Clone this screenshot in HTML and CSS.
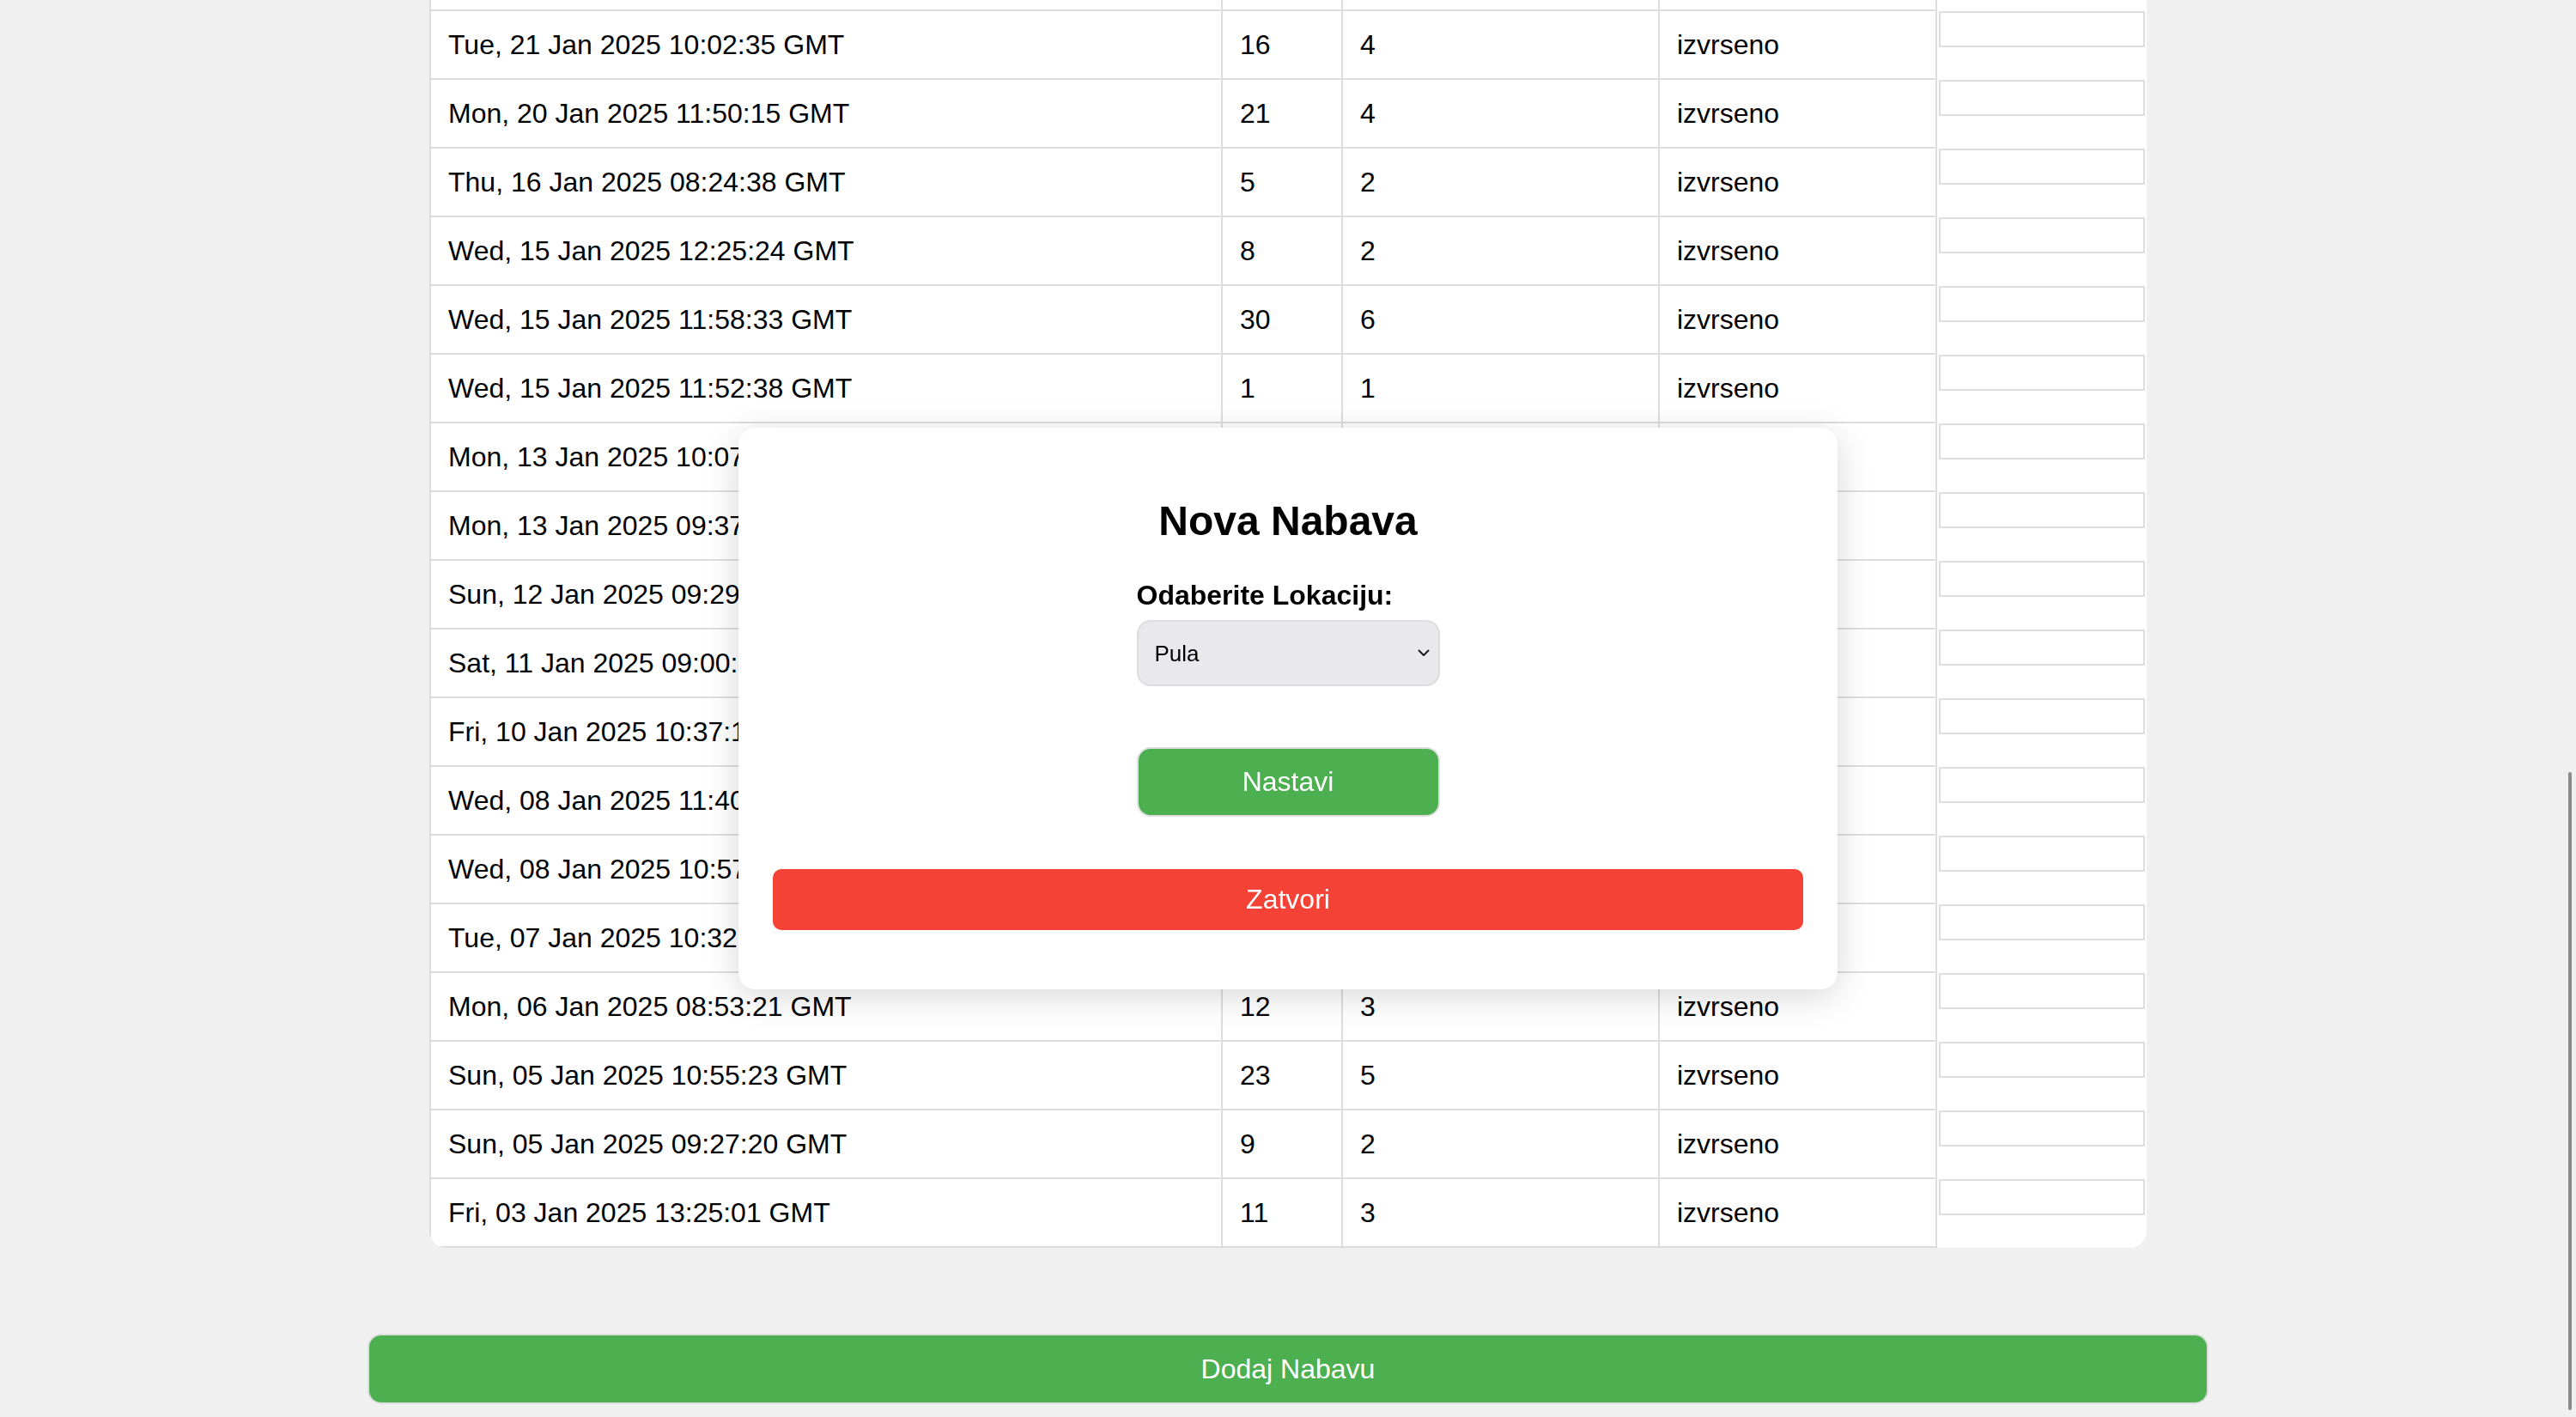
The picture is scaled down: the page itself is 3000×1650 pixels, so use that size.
FILE: index.html
```html
<!DOCTYPE html>
<html lang="hr">
<head>
<meta charset="utf-8">
<title>Nabava</title>
<link rel="stylesheet" href="styles.css">
</head>
<body>
<main class="page">
  <section class="table-card">
    <table class="orders">
      <colgroup>
        <col class="c-date">
        <col class="c-qty">
        <col class="c-items">
        <col class="c-status">
        <col class="c-action">
      </colgroup>
      <tbody>
        <tr class="row-partial"><td></td><td></td><td></td><td></td><td class="action"></td></tr>
        <tr><td>Tue, 21 Jan 2025 10:02:35 GMT</td><td>16</td><td>4</td><td>izvrseno</td><td class="action"><div class="slot"></div></td></tr>
        <tr><td>Mon, 20 Jan 2025 11:50:15 GMT</td><td>21</td><td>4</td><td>izvrseno</td><td class="action"><div class="slot"></div></td></tr>
        <tr><td>Thu, 16 Jan 2025 08:24:38 GMT</td><td>5</td><td>2</td><td>izvrseno</td><td class="action"><div class="slot"></div></td></tr>
        <tr><td>Wed, 15 Jan 2025 12:25:24 GMT</td><td>8</td><td>2</td><td>izvrseno</td><td class="action"><div class="slot"></div></td></tr>
        <tr><td>Wed, 15 Jan 2025 11:58:33 GMT</td><td>30</td><td>6</td><td>izvrseno</td><td class="action"><div class="slot"></div></td></tr>
        <tr><td>Wed, 15 Jan 2025 11:52:38 GMT</td><td>1</td><td>1</td><td>izvrseno</td><td class="action"><div class="slot"></div></td></tr>
        <tr><td>Mon, 13 Jan 2025 10:07:14 GMT</td><td></td><td></td><td></td><td class="action"><div class="slot"></div></td></tr>
        <tr><td>Mon, 13 Jan 2025 09:37:52 GMT</td><td></td><td></td><td></td><td class="action"><div class="slot"></div></td></tr>
        <tr><td>Sun, 12 Jan 2025 09:29:05 GMT</td><td></td><td></td><td></td><td class="action"><div class="slot"></div></td></tr>
        <tr><td>Sat, 11 Jan 2025 09:00:41 GMT</td><td></td><td></td><td></td><td class="action"><div class="slot"></div></td></tr>
        <tr><td>Fri, 10 Jan 2025 10:37:18 GMT</td><td></td><td></td><td></td><td class="action"><div class="slot"></div></td></tr>
        <tr><td>Wed, 08 Jan 2025 11:40:27 GMT</td><td></td><td></td><td></td><td class="action"><div class="slot"></div></td></tr>
        <tr><td>Wed, 08 Jan 2025 10:57:33 GMT</td><td></td><td></td><td></td><td class="action"><div class="slot"></div></td></tr>
        <tr><td>Tue, 07 Jan 2025 10:32:09 GMT</td><td></td><td></td><td></td><td class="action"><div class="slot"></div></td></tr>
        <tr><td>Mon, 06 Jan 2025 08:53:21 GMT</td><td>12</td><td>3</td><td>izvrseno</td><td class="action"><div class="slot"></div></td></tr>
        <tr><td>Sun, 05 Jan 2025 10:55:23 GMT</td><td>23</td><td>5</td><td>izvrseno</td><td class="action"><div class="slot"></div></td></tr>
        <tr><td>Sun, 05 Jan 2025 09:27:20 GMT</td><td>9</td><td>2</td><td>izvrseno</td><td class="action"><div class="slot"></div></td></tr>
        <tr><td>Fri, 03 Jan 2025 13:25:01 GMT</td><td>11</td><td>3</td><td>izvrseno</td><td class="action"><div class="slot"></div></td></tr>
      </tbody>
    </table>
  </section>
  <button class="add-btn" type="button">Dodaj Nabavu</button>
</main>

<div class="modal">
  <h2 class="modal-title">Nova Nabava</h2>
  <div class="field">
    <label class="field-label" for="lokacija">Odaberite Lokaciju:</label>
    <div class="select-wrap">
      <select id="lokacija" class="select">
        <option>Pula</option>
      </select>
      <svg class="chevron" width="14" height="9" viewBox="0 0 14 9" aria-hidden="true"><path d="M1.5 1.5 L7 7 L12.5 1.5" fill="none" stroke="#1a1a1a" stroke-width="2" stroke-linecap="round" stroke-linejoin="round"/></svg>
    </div>
  </div>
  <button class="btn-continue" type="button">Nastavi</button>
  <button class="btn-close" type="button">Zatvori</button>
</div>

<div class="scroll-thumb"></div>
</body>
</html>
```

FILE: styles.css
```css
html, body {
  margin: 0;
  height: 100%;
}

body {
  background: #f0f0f0;
  font-family: "Liberation Sans", Arial, sans-serif;
  color: #000;
  overflow: hidden;
}

.page {
  height: 100vh;
  box-sizing: border-box;
  padding-bottom: 15px;
  display: flex;
  flex-direction: column;
  justify-content: flex-end;
  align-items: center;
  overflow: hidden;
}

.table-card {
  flex-shrink: 0;
  width: 2000px;
  background: #fff;
  border-radius: 20px;
  overflow: hidden;
}

.orders {
  width: 2000px;
  table-layout: fixed;
  border-collapse: separate;
  border-spacing: 0;
  font-size: 32px;
  line-height: 38px;
}

.c-date { width: 922px; }
.c-qty { width: 140px; }
.c-items { width: 369px; }
.c-status { width: 323px; }
.c-action { width: 246px; }

.orders td {
  height: 38px;
  border-left: 2px solid #ddd;
  border-top: 2px solid #ddd;
  padding: 20px;
  text-align: left;
  vertical-align: middle;
  white-space: nowrap;
  overflow: hidden;
}

.orders tr:last-child td {
  border-bottom: 2px solid #ddd;
}

.orders td.action {
  border-top: none;
  padding: 2px 2px 0 2px;
  vertical-align: top;
}

.orders tr:last-child td.action {
  border-bottom: none;
}

.slot {
  height: 42px;
  box-sizing: border-box;
  border: 2px solid #ddd;
  background: #fff;
}

.add-btn {
  flex-shrink: 0;
  margin-top: 100px;
  width: 2144px;
  height: 82px;
  background: #4caf50;
  color: #fff;
  border: 2px solid #ddd;
  border-radius: 16px;
  font-family: "Liberation Sans", Arial, sans-serif;
  font-size: 32px;
}

.modal {
  position: fixed;
  left: 50%;
  top: 50%;
  transform: translate(-50%, -50%);
  width: 1280px;
  box-sizing: border-box;
  padding: 40px;
  background: #fff;
  border-radius: 20px;
  box-shadow: 0 8px 40px rgba(0, 0, 0, 0.16);
  text-align: center;
}

.modal-title {
  margin: 41px 0 39px;
  font-size: 48px;
  line-height: 56px;
  font-weight: bold;
}

.field {
  width: 353px;
  margin: 0 auto;
  text-align: left;
}

.field-label {
  display: block;
  font-size: 32px;
  line-height: 38px;
  font-weight: bold;
  margin-bottom: 10px;
}

.select-wrap {
  position: relative;
  height: 77px;
}

.select {
  appearance: none;
  -webkit-appearance: none;
  display: block;
  width: 353px;
  height: 77px;
  box-sizing: border-box;
  margin: 0;
  padding: 0 19px;
  background: #e9e9ed;
  border: 2px solid #ddd;
  border-radius: 16px;
  color: #000;
  font-family: "Liberation Sans", Arial, sans-serif;
  font-size: 26px;
}

.chevron {
  position: absolute;
  right: 12px;
  top: 34px;
}

.btn-continue {
  display: block;
  margin: 71px auto 0;
  width: 353px;
  height: 81px;
  background: #4caf50;
  color: #fff;
  border: 2px solid #ddd;
  border-radius: 16px;
  font-family: "Liberation Sans", Arial, sans-serif;
  font-size: 32px;
}

.btn-close {
  display: block;
  margin: 61px 0 29px;
  width: 100%;
  height: 71px;
  background: #f44336;
  color: #fff;
  border: none;
  border-radius: 10px;
  font-family: "Liberation Sans", Arial, sans-serif;
  font-size: 32px;
}

.scroll-thumb {
  position: fixed;
  right: 5px;
  top: 899px;
  width: 4px;
  height: 743px;
  border-radius: 2px;
  background: #8a8a8a;
}
```
